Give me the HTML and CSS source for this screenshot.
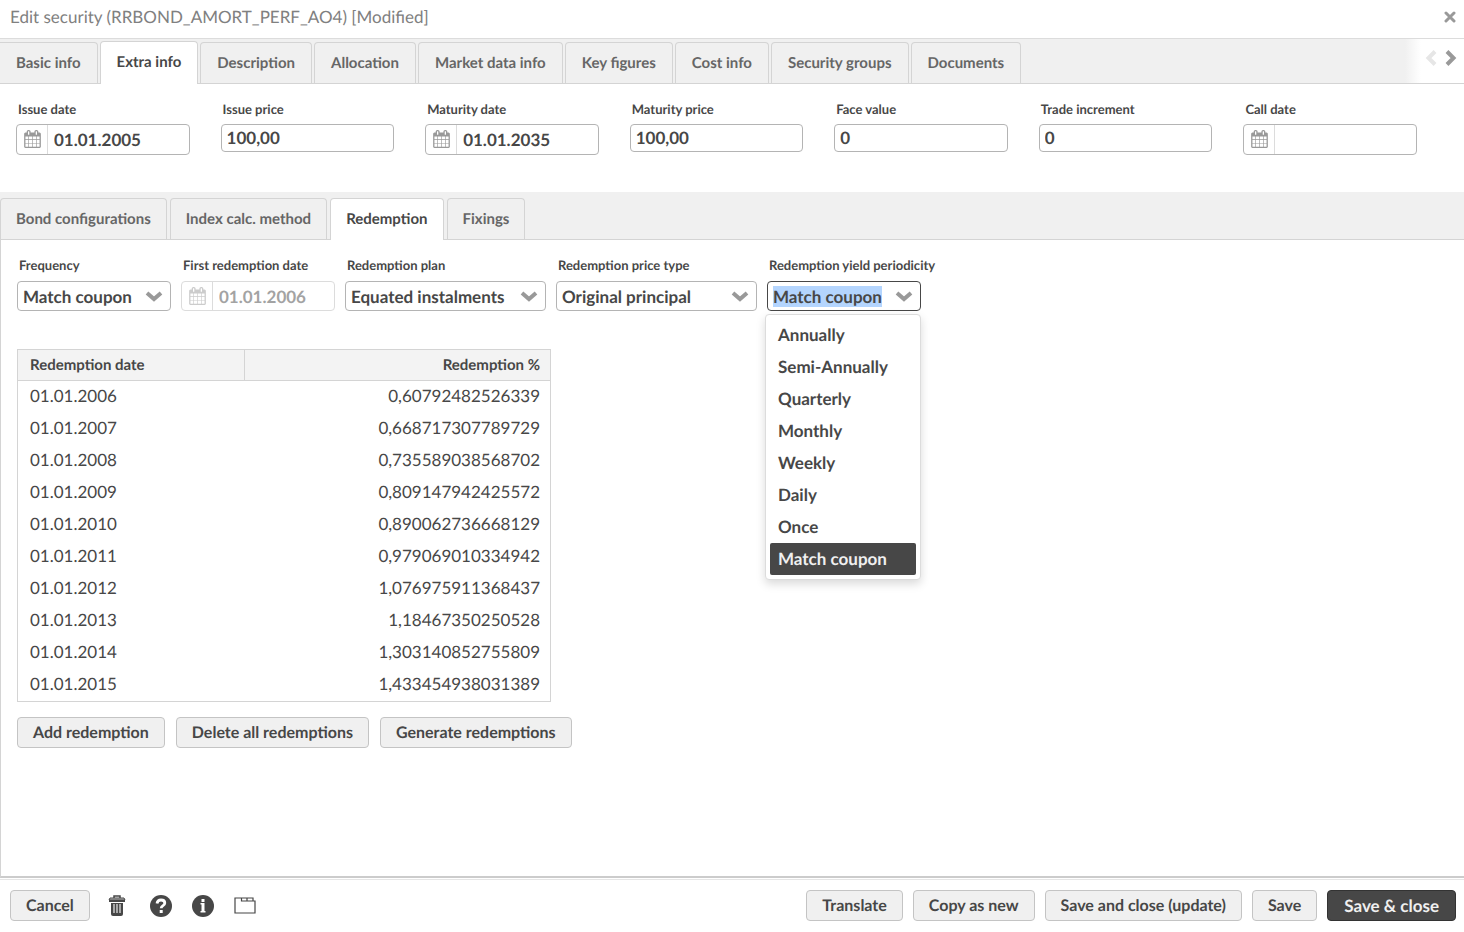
FILE: index.html
```html
<!DOCTYPE html>
<html lang="en">
<head>
    <meta charset="UTF-8">
    <meta name="viewport" content="width=device-width, initial-scale=1.0">
    <title>Edit security</title>
    <link rel="stylesheet" href="styles.css">
</head>
<body>
    <svg class="sprite" aria-hidden="true">
        <symbol id="icon-calendar" viewBox="0 0 1664 1792">
            <path d="M128 1664h288v-288H128v288zm352 0h320v-288H480v288zm-352-352h288V992H128v320zm352 0h320V992H480v320zM128 928h288V640H128v288zm736 736h320v-288H864v288zM480 928h320V640H480v288zm768 736h288v-288h-288v288zm-384-352h320V992H864v320zM512 448V160q0-13-9.500-22.500T480 128h-64q-13 0-22.500 9.500T384 160v288q0 13 9.500 22.500T416 480h64q13 0 22.500-9.500T512 448zm736 864h288V992h-288v320zM864 928h320V640H864v288zm384 0h288V640h-288v288zm32-480V160q0-13-9.500-22.500T1248 128h-64q-13 0-22.500 9.500T1152 160v288q0 13 9.500 22.500t22.500 9.500h64q13 0 22.500-9.500t9.500-22.500zm384-64v1280q0 52-38 90t-90 38H128q-52 0-90-38t-38-90V384q0-52 38-90t90-38h128v-96q0-66 47-113T416 0h64q66 0 113 47t47 113v96h384v-96q0-66 47-113t113-47h64q66 0 113 47t47 113v96h128q52 0 90 38t38 90z"/>
        </symbol>
        <symbol id="icon-down" viewBox="0 0 18 12">
            <path d="M2 3l7 6 7-6" fill="none" stroke="currentColor" stroke-width="4"/>
        </symbol>
    </svg>

    <header class="title-bar">
        <h1>Edit security (RRBOND_AMORT_PERF_AO4) [Modified]</h1>
        <button class="icon-button close" aria-label="Close">
            <svg width="12" height="12" viewBox="0 0 12 12"><path d="M2 2l8 8M10 2l-8 8" fill="none" stroke="currentColor" stroke-width="3" stroke-linecap="round"/></svg>
        </button>
    </header>

    <nav class="tabs main-tabs">
        <button class="tab">Basic info</button>
        <button class="tab active">Extra info</button>
        <button class="tab">Description</button>
        <button class="tab">Allocation</button>
        <button class="tab">Market data info</button>
        <button class="tab">Key figures</button>
        <button class="tab">Cost info</button>
        <button class="tab">Security groups</button>
        <button class="tab">Documents</button>
        <div class="tab-scroll">
            <button class="icon-button" aria-label="Previous tabs" disabled>
                <svg width="12" height="18" viewBox="0 0 12 18"><path d="M10 2.500L3.500 9l6.500 6.500" fill="none" stroke="currentColor" stroke-width="4"/></svg>
            </button>
            <button class="icon-button" aria-label="Next tabs">
                <svg width="12" height="18" viewBox="0 0 12 18"><path d="M2 2.500L8.500 9 2 15.500" fill="none" stroke="currentColor" stroke-width="4"/></svg>
            </button>
        </div>
    </nav>

    <section class="basic-fields">
        <div class="field">
            <label for="issue-date">Issue date</label>
            <div class="date-box">
                <svg class="calendar"><use href="#icon-calendar"/></svg>
                <input type="text" id="issue-date" value="01.01.2005">
            </div>
        </div>
        <div class="field">
            <label for="issue-price">Issue price</label>
            <input type="text" class="text-box" id="issue-price" value="100,00">
        </div>
        <div class="field">
            <label for="maturity-date">Maturity date</label>
            <div class="date-box">
                <svg class="calendar"><use href="#icon-calendar"/></svg>
                <input type="text" id="maturity-date" value="01.01.2035">
            </div>
        </div>
        <div class="field">
            <label for="maturity-price">Maturity price</label>
            <input type="text" class="text-box" id="maturity-price" value="100,00">
        </div>
        <div class="field">
            <label for="face-value">Face value</label>
            <input type="text" class="text-box" id="face-value" value="0">
        </div>
        <div class="field">
            <label for="trade-increment">Trade increment</label>
            <input type="text" class="text-box" id="trade-increment" value="0">
        </div>
        <div class="field">
            <label for="call-date">Call date</label>
            <div class="date-box">
                <svg class="calendar"><use href="#icon-calendar"/></svg>
                <input type="text" id="call-date" value="">
            </div>
        </div>
    </section>

    <nav class="tabs sub-tabs">
        <button class="tab">Bond configurations</button>
        <button class="tab">Index calc. method</button>
        <button class="tab active">Redemption</button>
        <button class="tab">Fixings</button>
    </nav>

    <main class="panel">
        <div class="redemption-fields">
            <div class="field">
                <label for="frequency">Frequency</label>
                <div class="select-box">
                    <select id="frequency"><option>Match coupon</option></select>
                    <svg class="arrow"><use href="#icon-down"/></svg>
                </div>
            </div>
            <div class="field disabled">
                <label for="first-date">First redemption date</label>
                <div class="date-box">
                    <svg class="calendar"><use href="#icon-calendar"/></svg>
                    <input type="text" id="first-date" value="01.01.2006" disabled>
                </div>
            </div>
            <div class="field wide">
                <label for="plan">Redemption plan</label>
                <div class="select-box">
                    <select id="plan"><option>Equated instalments</option></select>
                    <svg class="arrow"><use href="#icon-down"/></svg>
                </div>
            </div>
            <div class="field wide">
                <label for="price-type">Redemption price type</label>
                <div class="select-box">
                    <select id="price-type"><option>Original principal</option></select>
                    <svg class="arrow"><use href="#icon-down"/></svg>
                </div>
            </div>
            <div class="field">
                <label for="periodicity">Redemption yield periodicity</label>
                <div class="select-box">
                    <input type="text" id="periodicity" role="combobox" aria-expanded="true" aria-controls="periodicity-list" value="Match coupon">
                    <svg class="arrow"><use href="#icon-down"/></svg>
                    <ul class="menu" id="periodicity-list" role="listbox">
                        <li role="option">Annually</li>
                        <li role="option">Semi-Annually</li>
                        <li role="option">Quarterly</li>
                        <li role="option">Monthly</li>
                        <li role="option">Weekly</li>
                        <li role="option">Daily</li>
                        <li role="option">Once</li>
                        <li role="option" class="selected" aria-selected="true">Match coupon</li>
                    </ul>
                </div>
            </div>
        </div>

        <table class="redemptions">
            <thead>
                <tr><th>Redemption date</th><th>Redemption %</th></tr>
            </thead>
            <tbody>
                <tr><td>01.01.2006</td><td>0,60792482526339</td></tr>
                <tr><td>01.01.2007</td><td>0,668717307789729</td></tr>
                <tr><td>01.01.2008</td><td>0,735589038568702</td></tr>
                <tr><td>01.01.2009</td><td>0,809147942425572</td></tr>
                <tr><td>01.01.2010</td><td>0,890062736668129</td></tr>
                <tr><td>01.01.2011</td><td>0,979069010334942</td></tr>
                <tr><td>01.01.2012</td><td>1,076975911368437</td></tr>
                <tr><td>01.01.2013</td><td>1,18467350250528</td></tr>
                <tr><td>01.01.2014</td><td>1,303140852755809</td></tr>
                <tr><td>01.01.2015</td><td>1,433454938031389</td></tr>
            </tbody>
        </table>

        <div class="button-row">
            <button class="button">Add redemption</button>
            <button class="button">Delete all redemptions</button>
            <button class="button">Generate redemptions</button>
        </div>
    </main>

    <footer class="footer">
        <button class="button">Cancel</button>
        <div class="footer-icons">
            <button class="icon-button" aria-label="Delete">
                <svg width="18" height="22" viewBox="0 0 18 22">
                    <path d="M6 3V1h6v2" fill="none" stroke="currentColor" stroke-width="1.500"/>
                    <path d="M2 3h14l1 2H1z" fill="#b8b8b8" stroke="currentColor" stroke-width="1"/>
                    <path d="M1 5h16v2H1z"/>
                    <path d="M3 8h12v11q0 2-2 2H5q-2 0-2-2z"/>
                    <path d="M6 9v9M9 9v9M12 9v9" stroke="#ddd" stroke-width="1.300"/>
                </svg>
            </button>
            <button class="icon-button" aria-label="Help">
                <svg width="22" height="22" viewBox="0 0 22 22">
                    <circle cx="11" cy="11" r="11"/>
                    <path d="M7 8.500q.5-3.500 4-3.500 3.800 0 3.800 3 0 1.500-1.800 2.600-1.800 1-1.800 2.700" fill="none" stroke="#fff" stroke-width="2.800"/>
                    <path d="M9.700 15h3v3h-3z" fill="#fff"/>
                </svg>
            </button>
            <button class="icon-button" aria-label="Information">
                <svg width="22" height="22" viewBox="0 0 22 22">
                    <circle cx="11" cy="11" r="11"/>
                    <path d="M9.500 4h3v3h-3zM8.500 8h4v8h1v1.500h-5V16h1V9.500h-1z" fill="#fff"/>
                </svg>
            </button>
            <button class="icon-button" aria-label="Open in new tab">
                <svg width="22" height="17" viewBox="0 0 22 17">
                    <path d="M1 1h6.500v3H21v12H1zM7.500 1h5.500v2.500M13 1h6v3" fill="none" stroke="currentColor" stroke-width="1.200"/>
                </svg>
            </button>
        </div>
        <div class="footer-actions">
            <button class="button">Translate</button>
            <button class="button">Copy as new</button>
            <button class="button">Save and close (update)</button>
            <button class="button">Save</button>
            <button class="button primary">Save &amp; close</button>
        </div>
    </footer>

    <script>
        const periodicity = document.getElementById("periodicity");
        periodicity.focus();
        periodicity.select();
    </script>
</body>
</html>
```
FILE: styles.css
```css
* {
    box-sizing: border-box;
}
body {
    font-family: Lato, sans-serif;
    font-size: 17px;
    text-rendering: geometricPrecision;
    color: #474747;
    background-color: #fff;
    margin: 0;
    min-height: 100vh;
    display: flex;
    flex-direction: column;
}
button, input, select {
    font-family: inherit;
    text-rendering: inherit;
    color: inherit;
}
svg {
    display: block;
    fill: currentColor;
}
.sprite {
    position: absolute;
    width: 0;
    height: 0;
}
.icon-button {
    background: none;
    border: none;
    padding: 0;
    cursor: pointer;
}

/* title bar */
.title-bar {
    display: flex;
    align-items: center;
    justify-content: space-between;
    height: 38px;
    padding: 0 8px 5px 10px;
    color: #808080;
}
.title-bar h1 {
    margin: 0;
    font-size: 17px;
    font-weight: 400;
}
.close {
    color: #999;
}

/* tabs */
.tabs {
    display: flex;
    align-items: flex-end;
    background-color: #f0f0f0;
    border-bottom: 1px solid #d4d4d4;
}
.tab {
    height: 41px;
    padding: 0 16px 1px;
    border: 1px solid #d4d4d4;
    border-bottom: none;
    border-radius: 4px 4px 0 0;
    background-color: #f0f0f0;
    color: #666;
    font-size: 15px;
    font-weight: 700;
    white-space: nowrap;
    cursor: pointer;
}
.tab.active {
    height: 42px;
    margin-bottom: -1px;
    padding-bottom: 2px;
    background-color: #fff;
    color: #474747;
}
.main-tabs {
    height: 46px;
    border-top: 1px solid #dcdcdc;
    gap: 2px;
}
.main-tabs .tab:first-child {
    border-left: none;
    border-top-left-radius: 0;
}
.main-tabs .tab.active {
    height: 43px;
    padding-bottom: 3px;
}
.tab-scroll {
    display: flex;
    align-items: center;
    gap: 8px;
    align-self: stretch;
    margin-left: auto;
    padding: 0 7px 6px 20px;
    background: linear-gradient(to right, #f0f0f0, #fff 16px);
    color: #999;
}
.tab-scroll button:disabled {
    color: #e6e6e6;
}
.sub-tabs {
    height: 48px;
    gap: 3px;
}
.sub-tabs .tab {
    padding-left: 15px;
    padding-right: 15px;
}

/* fields */
.field {
    display: flex;
    flex-direction: column;
    gap: 6px;
}
.field label {
    padding-left: 2px;
    font-size: 13px;
    font-weight: 700;
    line-height: 17px;
    white-space: nowrap;
}
.text-box, .date-box, .select-box select, .select-box input {
    width: 100%;
    border: 1px solid #b4b4b4;
    border-radius: 4px;
    background-color: #fff;
}
.field input, .field select {
    font-size: 17px;
    font-weight: 700;
    outline: none;
}
.text-box {
    height: 28px;
    padding: 0 5px 1px;
}
.date-box {
    display: flex;
    align-items: center;
    height: 31px;
}
.calendar {
    flex: none;
    width: 17px;
    height: 18px;
    margin: 0 6px 1px 7px;
    color: #999;
}
.date-box input {
    flex: 1;
    min-width: 0;
    height: 100%;
    padding: 0 6px;
    border: none;
    border-left: 1px solid #dcdcdc;
    background: none;
}
.field.disabled .date-box {
    height: 30px;
    border-color: #dcdcdc;
}
.field.disabled .calendar {
    color: #ccc;
}
.field.disabled input {
    color: #a3a3a3;
}
.select-box {
    position: relative;
    display: grid;
    align-items: center;
}
.select-box select, .select-box input, .arrow {
    grid-area: 1 / 1;
}
.select-box select, .select-box input {
    appearance: none;
    height: 30px;
    padding: 0 5px;
}
.select-box input:focus {
    border-color: #474747;
}
.select-box input::selection {
    background-color: #b4d5fe;
    color: #474747;
}
.arrow {
    justify-self: end;
    width: 18px;
    height: 12px;
    margin-right: 8px;
    color: #999;
    pointer-events: none;
}
.basic-fields {
    display: grid;
    grid-template-columns: repeat(7, minmax(0, 1fr));
    align-items: start;
    gap: 31px;
    padding: 17px 47px 37px 16px;
}

/* redemption panel */
.panel {
    flex: 1;
    padding: 17px 16px;
    border-left: 1px solid #d4d4d4;
    border-bottom: 2px solid #ccc;
}
.redemption-fields {
    display: flex;
    gap: 10px;
}
.redemption-fields .field {
    width: 154px;
    gap: 7px;
}
.redemption-fields .field.wide {
    width: 201px;
}
.menu {
    position: absolute;
    top: 33px;
    left: -2px;
    right: 0;
    margin: 0;
    padding: 4px;
    list-style: none;
    border: 1px solid #dcdcdc;
    border-radius: 4px;
    background-color: #fff;
    box-shadow: 0 4px 10px rgba(0, 0, 0, 0.15);
    font-weight: 700;
}
.menu li {
    padding: 0 8px;
    line-height: 32px;
    white-space: nowrap;
    border-radius: 2px;
}
.menu li.selected {
    background-color: #474747;
    color: #f0f0f0;
}
.redemptions {
    width: 534px;
    margin-top: 38px;
    border: 1px solid #d4d4d4;
    border-spacing: 0;
    table-layout: fixed;
}
.redemptions th, .redemptions td {
    height: 32px;
    padding: 0 10px 4px 12px;
    text-align: left;
}
.redemptions th {
    padding-bottom: 1px;
    background-color: #f3f3f3;
    border-bottom: 1px solid #d4d4d4;
    font-size: 15px;
}
.redemptions th:first-child {
    width: 227px;
    border-right: 1px solid #d4d4d4;
}
.redemptions th:last-child, .redemptions td:last-child {
    text-align: right;
}
.redemptions thead th {
    height: 31px;
}

/* buttons */
.button-row {
    display: flex;
    gap: 11px;
    margin-top: 15px;
}
.button {
    height: 31px;
    padding: 0 15px 1px;
    border: 1px solid #c4c4c4;
    border-radius: 4px;
    background-color: #f0f0f0;
    font-size: 16px;
    font-weight: 700;
    white-space: nowrap;
    cursor: pointer;
}
.button.primary {
    padding: 0 16px;
    border-color: #333;
    background-color: #474747;
    color: #f0f0f0;
    font-size: 17px;
}

/* footer */
.footer {
    display: flex;
    align-items: center;
    margin-top: 1px;
    padding: 10px 8px 11px 10px;
    border-top: 1px solid #e6e6e6;
}
.footer .button {
    padding-bottom: 0;
}
.footer-icons {
    display: flex;
    align-items: center;
    gap: 20px;
    margin-left: 18px;
}
.footer-icons .icon-button:first-child {
    margin-right: 4px;
}
.footer-actions {
    display: flex;
    gap: 10px;
    margin-left: auto;
}
```
